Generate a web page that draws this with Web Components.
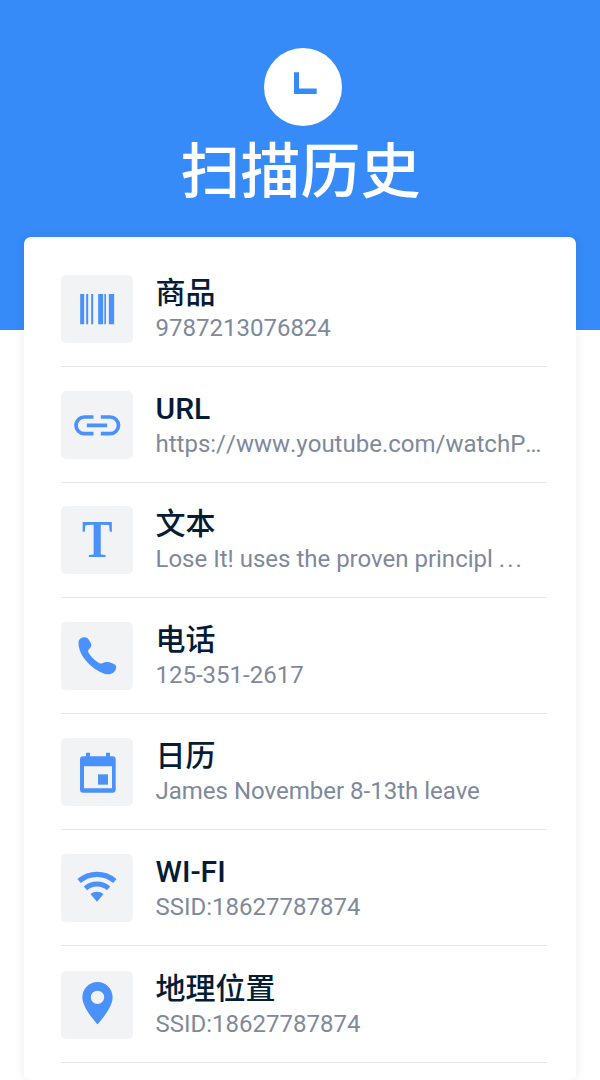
<!DOCTYPE html>
<html lang="zh-CN">
<head>
<meta charset="utf-8">
<title>扫描历史</title>
<style>
	body {
		margin: 0;
		height: 1080px;
		overflow: hidden;
		background: #fff;
		font-family: Roboto, "Noto Sans CJK SC", sans-serif;
	}
	.url {
		font-kerning: none;
	}
	.wide {
		letter-spacing: 2px;
	}
</style>
</head>
<body>
<history-page>
	<history-header slot="header">扫描历史</history-header>
	<history-card>
		<history-item icon="barcode">商品<span slot="detail">9787213076824</span></history-item>
		<history-item icon="link">URL<span slot="detail" class="url">https://www.youtube.com/watchP…</span></history-item>
		<history-item icon="text">文本<span slot="detail">Lose It! uses the proven principl <span class="wide">...</span></span></history-item>
		<history-item icon="phone">电话<span slot="detail">125-351-2617</span></history-item>
		<history-item icon="calendar">日历<span slot="detail">James November 8-13th leave</span></history-item>
		<history-item icon="wifi">WI-FI<span slot="detail">SSID:18627787874</span></history-item>
		<history-item icon="pin">地理位置<span slot="detail">SSID:18627787874</span></history-item>
	</history-card>
</history-page>

<script>
const ICONS = {
	barcode: `<path d="M56 57h12v91H56zM74 57h6v91h-6zM89 57h6v91h-6zM110 57h15v91h-15zM128.500 57h5v91h-5zM142 57h16v91h-16z"/>`,
	link: `<path fill="none" stroke="currentColor" stroke-width="11" d="M96 78H68.500a25 25 0 0 0 0 50H96M118 78h28a25 25 0 0 1 0 50h-28M76 103h61"/>`,
	text: `<text transform="translate(107.500 153) scale(0.88 1)" text-anchor="middle" font-family="Liberation Serif, serif" font-weight="700" font-size="156">T</text>`,
	phone: `<path d="M51 63C51 51 61 46 69 46C76 46 80 50 83 55L88 64C91 70 89 77 84 80C78 84 79 89 83 95C90 106 99 114 109 121C115 125 119 126 124 123C130 119 137 119 144 121L156 125C162 127 165 132 164 138C162 149 152 157 141 157C112 157 51 112 51 63Z"/>`,
	calendar: `<path fill-rule="evenodd" d="M73.500 44h12v11h48V44h12v11h8a9 9 0 0 1 9 9v91a9 9 0 0 1-9 9h-89a9 9 0 0 1-9-9V64a9 9 0 0 1 9-9h9zM67.500 85v66h84V85z"/><path d="M109.500 109h30v31h-30z"/>`,
	wifi: `<path fill="none" stroke="currentColor" stroke-width="15.500" d="M52.800 81.100a82 82 0 0 1 107.400 0M71.800 103a53 53 0 0 1 69.400 0"/><path d="M106.500 143L86.800 120.300a30 30 0 0 1 39.400 0z"/>`,
	pin: `<path fill-rule="evenodd" d="M108 33C83 33 62.500 53 62.500 79C62.500 112 108 160 108 160C108 160 153.500 112 153.500 79C153.500 53 133 33 108 33ZM108 59a20 20 0 1 1 0 40a20 20 0 1 1 0-40z"/>`
};

class HistoryPage extends HTMLElement {
	constructor() {
		super();
		this.attachShadow({ mode: 'open' });
	}
	connectedCallback() {
		this.shadowRoot.innerHTML = `
			<style>
				:host {
					display: block;
					height: 1080px;
					box-sizing: border-box;
					padding: 0 24px;
					background: linear-gradient(#368bf8 330px, #fff 330px);
				}
			</style>
			<slot name="header"></slot>
			<slot></slot>
		`;
	}
}

class HistoryHeader extends HTMLElement {
	constructor() {
		super();
		this.attachShadow({ mode: 'open' });
	}
	connectedCallback() {
		this.shadowRoot.innerHTML = `
			<style>
				:host {
					display: flex;
					flex-direction: column;
					align-items: center;
					height: 237px;
					box-sizing: border-box;
					padding-top: 48px;
					color: #fff;
				}
				svg {
					display: block;
					width: 78px;
					height: 78px;
					margin-left: 6px;
				}
				h1 {
					margin: 0 0 0 1px;
					font-size: 60px;
					font-weight: 500;
					line-height: 94px;
				}
			</style>
			<svg viewBox="0 0 78 78">
				<circle cx="39" cy="39" r="39" fill="#fff"/>
				<path d="M30 24.300h5v16.200h17.700V46H30z" fill="#368bf8"/>
			</svg>
			<h1><slot></slot></h1>
		`;
	}
}

class HistoryCard extends HTMLElement {
	constructor() {
		super();
		this.attachShadow({ mode: 'open' });
	}
	connectedCallback() {
		this.shadowRoot.innerHTML = `
			<style>
				:host {
					display: block;
					height: 843px;
					box-sizing: border-box;
					padding: 14px 29px 0 37px;
					border-radius: 7px;
					background: #fff;
					box-shadow: 0 2px 12px rgba(0, 0, 0, 0.08);
				}
			</style>
			<slot></slot>
		`;
	}
}

class HistoryItem extends HTMLElement {
	constructor() {
		super();
		this.attachShadow({ mode: 'open' });
	}
	getStyles() {
		return `
			<style>
				:host {
					display: flex;
					gap: 22.5px;
					height: 115.8px;
					box-sizing: border-box;
					padding-top: 23.8px;
					border-bottom: 1px solid #e6e8eb;
				}
				:host(:last-child) {
					height: 117px;
					padding-top: 24.8px;
				}
				.tile {
					flex: none;
					width: 72px;
					height: 68px;
					border-radius: 5px;
					background: #f2f3f5;
					color: #4b91fb;
				}
				svg {
					display: block;
					width: 72px;
					height: 68px;
					fill: currentColor;
				}
				.info {
					flex: 1;
					min-width: 0;
					white-space: nowrap;
				}
				h2, p {
					margin: 0;
				}
				h2 {
					color: #041c36;
					font-size: 30px;
					font-weight: 500;
					line-height: 36px;
				}
				p {
					color: #7e899b;
					font-size: 24px;
					line-height: 34px;
				}
			</style>
		`;
	}
	connectedCallback() {
		this.shadowRoot.innerHTML = `
			${this.getStyles()}
			<div class="tile">
				<svg viewBox="-1.500 0 216 204">${ICONS[this.getAttribute('icon')]}</svg>
			</div>
			<div class="info">
				<h2><slot></slot></h2>
				<p><slot name="detail"></slot></p>
			</div>
		`;
	}
}

customElements.define('history-page', HistoryPage);
customElements.define('history-header', HistoryHeader);
customElements.define('history-card', HistoryCard);
customElements.define('history-item', HistoryItem);
</script>
</body>
</html>
